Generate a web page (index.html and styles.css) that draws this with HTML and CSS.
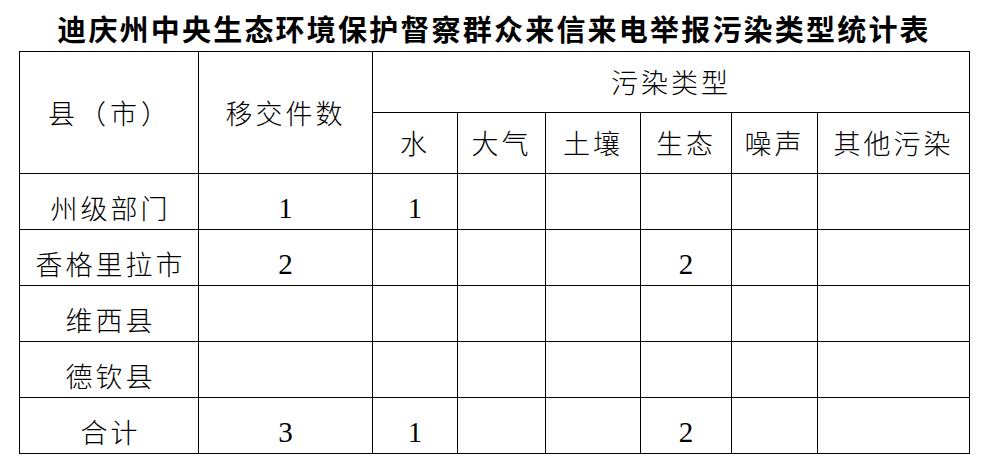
FILE: index.html
```html
<!DOCTYPE html>
<html lang="zh-CN">
<head>
<meta charset="utf-8">
<title>迪庆州中央生态环境保护督察群众来信来电举报污染类型统计表</title>
<link rel="stylesheet" href="styles.css">
</head>
<body>
<div class="page">
  <h1 class="title">迪庆州中央生态环境保护督察群众来信来电举报污染类型统计表</h1>
  <table class="stats">
    <colgroup>
      <col class="c-county">
      <col class="c-count">
      <col class="c-water">
      <col class="c-air">
      <col class="c-soil">
      <col class="c-eco">
      <col class="c-noise">
      <col class="c-other">
    </colgroup>
    <thead>
      <tr class="h1">
        <th rowspan="2" class="wide">县（市）</th>
        <th rowspan="2">移交件数</th>
        <th colspan="6">污染类型</th>
      </tr>
      <tr class="h2">
        <th>水</th>
        <th>大气</th>
        <th>土壤</th>
        <th>生态</th>
        <th>噪声</th>
        <th>其他污染</th>
      </tr>
    </thead>
    <tbody>
      <tr>
        <td class="name">州级部门</td>
        <td class="num">1</td>
        <td class="num">1</td>
        <td></td><td></td><td></td><td></td><td></td>
      </tr>
      <tr>
        <td class="name">香格里拉市</td>
        <td class="num">2</td>
        <td></td><td></td><td></td>
        <td class="num">2</td>
        <td></td><td></td>
      </tr>
      <tr>
        <td class="name">维西县</td>
        <td></td><td></td><td></td><td></td><td></td><td></td><td></td>
      </tr>
      <tr>
        <td class="name">德钦县</td>
        <td></td><td></td><td></td><td></td><td></td><td></td><td></td>
      </tr>
      <tr>
        <td class="name">合计</td>
        <td class="num">3</td>
        <td class="num">1</td>
        <td></td><td></td>
        <td class="num">2</td>
        <td></td><td></td>
      </tr>
    </tbody>
  </table>
</div>
</body>
</html>
```
FILE: styles.css
```css
html, body {
  margin: 0;
  padding: 0;
  background: #ffffff;
  color: #000000;
}

.page {
  width: 985px;
  padding-left: 19px;
  box-sizing: border-box;
  font-family: "Noto Sans CJK SC", "Liberation Serif", serif;
}

.title {
  margin: 0;
  padding-top: 13px;
  height: 30px;
  line-height: 30px;
  width: 950px;
  text-align: center;
  font-size: 29px;
  font-weight: bold;
  letter-spacing: 2.2px;
  margin-bottom: 8px;
  white-space: nowrap;
}

.stats {
  border-collapse: collapse;
  table-layout: fixed;
  width: 950px;
}

.stats th,
.stats td {
  border: 1.5px solid #000000;
  padding: 0;
  text-align: center;
  font-weight: 300;
  font-size: 27px;
  letter-spacing: 3px;
  white-space: nowrap;
  overflow: hidden;
}

.stats th.wide {
  letter-spacing: 4px;
  text-indent: 2px;
}

.c-county { width: 179px; }
.c-count { width: 174px; }
.c-water { width: 85px; }
.c-air { width: 88px; }
.c-soil { width: 95px; }
.c-eco { width: 91px; }
.c-noise { width: 86px; }
.c-other { width: 152px; }

.h1 th,
.h2 th {
  height: 60px;
  line-height: 30px;
}

.stats tbody td {
  height: 43px;
  padding-top: 12px;
  line-height: 30px;
  vertical-align: middle;
}

.stats td.num {
  font-family: "Liberation Serif", serif;
  font-weight: normal;
  font-size: 29px;
  letter-spacing: 0;
}

.stats td.name {
  text-indent: 3px;
}
```
